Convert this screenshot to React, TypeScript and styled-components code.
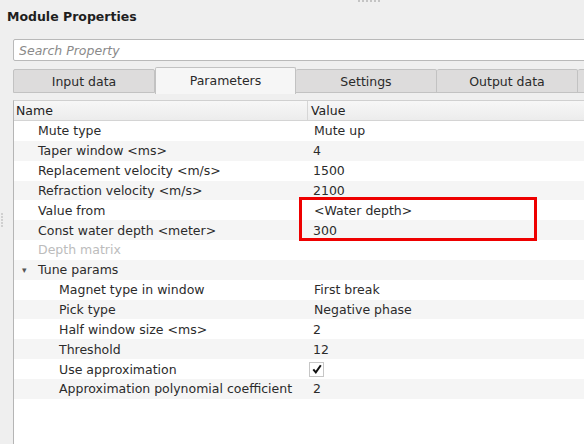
import React from 'react';
import styled, { createGlobalStyle } from 'styled-components';

type Row = {
  name: string;
  value?: string;
  level: number;
  disabled?: boolean;
  group?: boolean;
  check?: boolean;
  combo?: boolean;
};

const rows: Row[] = [
  { name: 'Mute type', value: 'Mute up', level: 1, combo: true },
  { name: 'Taper window <ms>', value: '4', level: 1 },
  { name: 'Replacement velocity <m/s>', value: '1500', level: 1 },
  { name: 'Refraction velocity <m/s>', value: '2100', level: 1 },
  { name: 'Value from', value: '<Water depth>', level: 1, combo: true },
  { name: 'Const water depth <meter>', value: '300', level: 1 },
  { name: 'Depth matrix', level: 1, disabled: true },
  { name: 'Tune params', level: 1, group: true },
  { name: 'Magnet type in window', value: 'First break', level: 2, combo: true },
  { name: 'Pick type', value: 'Negative phase', level: 2, combo: true },
  { name: 'Half window size <ms>', value: '2', level: 2 },
  { name: 'Threshold', value: '12', level: 2 },
  { name: 'Use approximation', level: 2, check: true },
  { name: 'Approximation polynomial coefficient', value: '2', level: 2 },
];

const tabs = ['Input data', 'Parameters', 'Settings', 'Output data', ''];

export default function App() {
  return (
    <>
      <GlobalStyle />
      <Page>
        <SplitterDots>
          {Array.from({ length: 6 }).map((_, i) => (
            <i key={i} />
          ))}
        </SplitterDots>
        <SideDots>
          {Array.from({ length: 5 }).map((_, i) => (
            <i key={i} />
          ))}
        </SideDots>
        <Title>Module Properties</Title>
        <Body>
          <Search placeholder="Search Property" readOnly />
          <TabBar>
            {tabs.map((t, i) => (
              <Tab key={i} $active={i === 1}>
                {t}
              </Tab>
            ))}
          </TabBar>
          <Table>
            <HeaderRow>
              <HeadCell>Name</HeadCell>
              <HeadCell $last>Value</HeadCell>
            </HeaderRow>
            {rows.map((r, i) => (
              <DataRow key={r.name} $alt={i % 2 === 1}>
                <NameCell $level={r.level} $disabled={r.disabled}>
                  {r.group && <Arrow>▾</Arrow>}
                  {r.name}
                </NameCell>
                <ValueCell $combo={r.combo}>
                  {r.check ? (
                    <CheckBox>
                      <svg width="12" height="12" viewBox="0 0 12 12">
                        <path d="M2.3 6.4 L4.8 9.4 L9.8 2.2" fill="none" stroke="#111" strokeWidth="2" />
                      </svg>
                    </CheckBox>
                  ) : (
                    r.value
                  )}
                </ValueCell>
              </DataRow>
            ))}
            <Highlight />
          </Table>
        </Body>
      </Page>
    </>
  );
}

const GlobalStyle = createGlobalStyle`
  html, body {
    margin: 0;
    background: #efefef;
    overflow: hidden;
  }
  body {
    font-family: "DejaVu Sans", "Noto Sans", sans-serif;
    font-size: 12.5px;
    color: #2b2b2b;
  }
`;

const Page = styled.div`
  position: relative;
  width: 584px;
  height: 444px;
  overflow: hidden;
`;

const SplitterDots = styled.div`
  position: absolute;
  left: 358px;
  top: 0;
  display: flex;
  gap: 2px;
  i {
    width: 2px;
    height: 2px;
    background: #c4c4c4;
  }
`;

const SideDots = styled.div`
  position: absolute;
  left: 1px;
  top: 213px;
  display: flex;
  flex-direction: column;
  gap: 1px;
  i {
    width: 2px;
    height: 2px;
    background: #d0d0d0;
  }
`;

const Title = styled.div`
  padding: 8px 0 0 7px;
  height: 26px;
  box-sizing: border-box;
  line-height: 18px;
  font-weight: bold;
  font-size: 12.5px;
  color: #1e1e1e;
`;

const Body = styled.div`
  padding: 13px 0 0 13px;
  width: 620px;
  display: flex;
  flex-direction: column;
`;

const Search = styled.input`
  height: 22px;
  box-sizing: border-box;
  border: 1px solid #b9b9b9;
  border-radius: 2px;
  background: #fff;
  padding: 0 5px;
  font-family: inherit;
  font-size: 12.5px;
  outline: none;
  &::placeholder {
    color: #8a8a8a;
    font-style: italic;
  }
`;

const TabBar = styled.div`
  display: flex;
  margin-top: 8px;
  height: 24px;
  align-items: flex-end;
`;

const Tab = styled.div<{ $active?: boolean }>`
  width: 141px;
  flex: none;
  box-sizing: border-box;
  height: ${(p) => (p.$active ? '27px' : '24px')};
  margin-bottom: ${(p) => (p.$active ? '-1px' : '0')};
  background: ${(p) => (p.$active ? '#f6f6f6' : '#dddcdc')};
  border: 1px solid #c2c2c2;
  border-bottom: ${(p) => (p.$active ? 'none' : '1px solid #c2c2c2')};
  border-left: ${(p) => (p.$active ? '1px solid #c2c2c2' : 'none')};
  border-radius: 2px 2px 0 0;
  display: flex;
  align-items: center;
  justify-content: center;
  padding-bottom: ${(p) => (p.$active ? '2px' : '0')};
  color: #2a2a2a;
  &:first-child {
    border-left: 1px solid #c2c2c2;
    width: 142px;
  }
`;

const Table = styled.div`
  position: relative;
  margin-top: 7px;
  height: 400px;
  background: #fff;
  border-left: 1px solid #b5b5b5;
  border-top: 1px solid #d0d0d0;
`;

const HeaderRow = styled.div`
  display: grid;
  grid-template-columns: 294px 1fr;
  height: 19px;
  background: linear-gradient(#f7f7f7, #ececec);
  border-bottom: 1px solid #d4d4d4;
`;

const HeadCell = styled.div<{ $last?: boolean }>`
  padding-left: ${(p) => (p.$last ? '3px' : '2px')};
  line-height: 19px;
  color: #222;
  border-right: ${(p) => (p.$last ? 'none' : '1px solid #d6d6d6')};
`;

const DataRow = styled.div<{ $alt?: boolean }>`
  display: grid;
  grid-template-columns: 294px 1fr;
  height: 19.85px;
  align-items: center;
  background: ${(p) => (p.$alt ? '#f5f5f5' : '#fff')};
`;

const NameCell = styled.div<{ $level: number; $disabled?: boolean }>`
  position: relative;
  padding-left: ${(p) => (p.$level === 2 ? 45 : 24)}px;
  color: ${(p) => (p.$disabled ? '#bcbcbc' : '#2b2b2b')};
  white-space: nowrap;
`;

const Arrow = styled.span`
  position: absolute;
  left: 8px;
  top: 0;
  font-size: 9px;
  line-height: 17px;
  color: #555;
`;

const ValueCell = styled.div<{ $combo?: boolean }>`
  padding-left: ${(p) => (p.$combo ? '6px' : '5px')};
  white-space: nowrap;
  display: flex;
  align-items: center;
`;

const CheckBox = styled.span`
  width: 13px;
  height: 13px;
  border: 1px solid #c6c6c6;
  background: #fff;
  display: flex;
  align-items: center;
  justify-content: center;
  margin-left: -4px;
`;

const Highlight = styled.div`
  position: absolute;
  left: 285px;
  top: 96px;
  width: 232px;
  height: 38px;
  border: 3px solid #ee0000;
`;
